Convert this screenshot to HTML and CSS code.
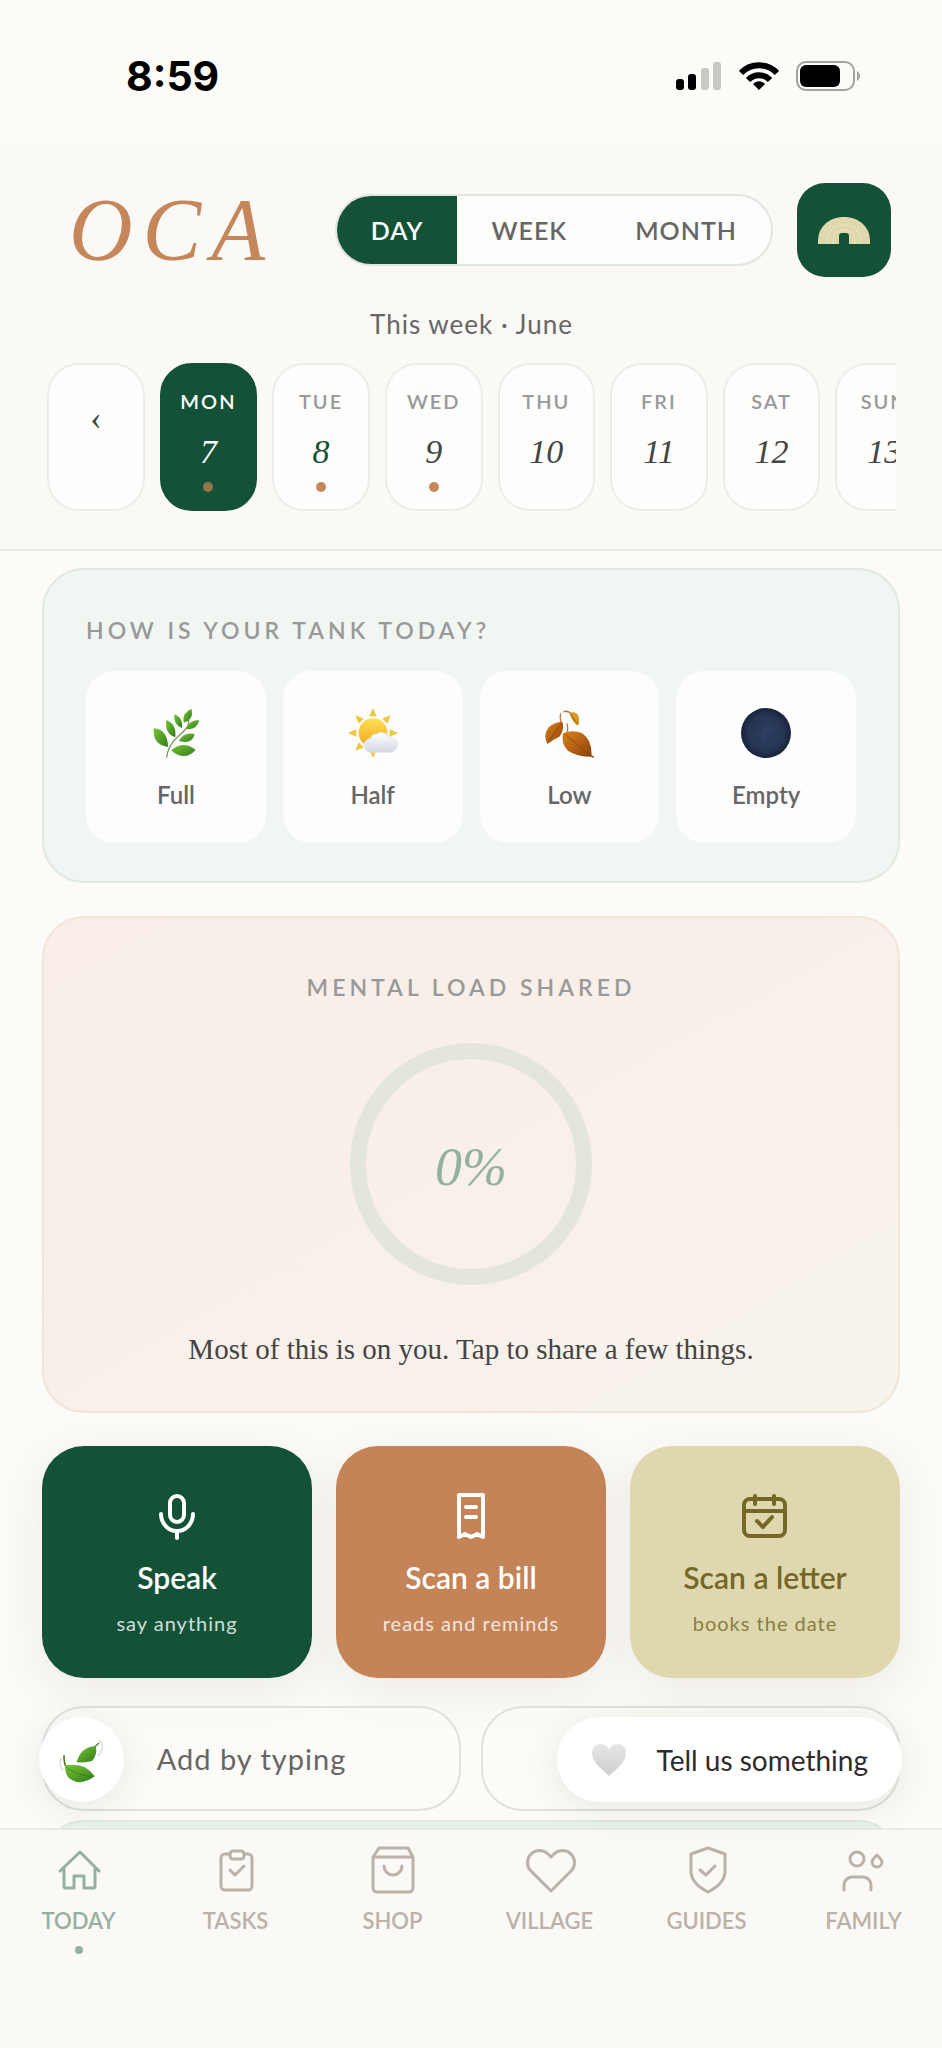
FILE: index.html
```html
<!DOCTYPE html>
<html lang="en">
<head>
<meta charset="utf-8">
<meta name="viewport" content="width=device-width, initial-scale=1">
<title>OCA</title>
<link rel="stylesheet" href="styles.css">
</head>
<body>
<div class="app">
  <div class="status">
    <span class="clock">8:59</span>
    <div class="indicators">
      <svg width="46" height="30" viewBox="0 0 46 30" aria-hidden="true">
        <rect x="0" y="18" width="8" height="11" rx="3"/>
        <rect x="12" y="13" width="8" height="16" rx="3"/>
        <rect x="25" y="7" width="8" height="22" rx="3" fill="#c9c8c4"/>
        <rect x="37" y="1" width="8" height="28" rx="3" fill="#c9c8c4"/>
      </svg>
      <svg width="40" height="30" viewBox="0 0 40 30" aria-hidden="true" fill="none" stroke="#000" stroke-width="6">
        <path d="M2 12a25 25 0 0 1 36 0"/>
        <path d="M9 19a15 15 0 0 1 22 0"/>
        <path d="M20 29l-6-6a8 8 0 0 1 12 0z" fill="#000" stroke="none"/>
      </svg>
      <svg width="64" height="30" viewBox="0 0 64 30" aria-hidden="true">
        <rect x="1" y="1" width="57" height="28" rx="9" fill="none" stroke="#a3a29f" stroke-width="2"/>
        <rect x="4" y="4" width="40" height="22" rx="6"/>
        <path d="M61 10c4 2 4 8 0 10z" fill="#a3a29f"/>
      </svg>
    </div>
  </div>

  <header class="header">
    <div class="topbar">
      <h1 class="brand">OCA</h1>
      <div class="segments">
        <button class="segment segment-active">DAY</button>
        <button class="segment">WEEK</button>
        <button class="segment">MONTH</button>
      </div>
      <button class="profile" aria-label="Home space">
        <svg width="52" height="27" viewBox="0 0 52 27" aria-hidden="true">
          <path d="M0 27v-3C0 10 11 0 26 0s26 10 26 24v3z" fill="#dfd8ad"/>
          <path d="M9 27v-3C9 14 16 8 26 8s17 6 17 16v3M15 27v-3c0-7 4-11 11-11s11 4 11 11v3" fill="none" stroke="#eee5c5" stroke-width="1"/>
          <path d="M21 27v-8a3 3 0 0 1 3-3h4a3 3 0 0 1 3 3v8z" fill="#145238"/>
        </svg>
      </button>
    </div>
    <p class="period">This week · June</p>
    <div class="days">
      <button class="day day-prev" aria-label="Previous week">‹</button>
      <button class="day day-active"><span class="day-name">MON</span><span class="day-number">7</span><span class="day-dot"></span></button>
      <button class="day"><span class="day-name">TUE</span><span class="day-number day-today">8</span><span class="day-dot"></span></button>
      <button class="day"><span class="day-name">WED</span><span class="day-number">9</span><span class="day-dot"></span></button>
      <button class="day"><span class="day-name">THU</span><span class="day-number">10</span></button>
      <button class="day"><span class="day-name">FRI</span><span class="day-number">11</span></button>
      <button class="day"><span class="day-name">SAT</span><span class="day-number">12</span></button>
      <button class="day"><span class="day-name">SUN</span><span class="day-number">13</span></button>
    </div>
  </header>

  <main class="content">
    <section class="card tank">
      <h2 class="eyebrow">HOW IS YOUR TANK TODAY?</h2>
      <div class="levels">
        <button class="level">
          <svg class="emoji" viewBox="0 0 150 150" aria-hidden="true">
            <defs><linearGradient id="leaf" x1="0" y1="0" x2="1" y2="1"><stop offset="0" stop-color="#7cc433"/><stop offset="1" stop-color="#2f7d1d"/></linearGradient></defs>
            <path d="M47 149Q50 112 85 82T112 36" fill="none" stroke="#7d9a62" stroke-width="4"/>
            <g fill="url(#leaf)">
              <path d="M8 61Q50 64 51 117Q4 110 8 61z"/>
              <path d="M46 36Q77 48 73 88Q40 78 46 36z"/>
              <path d="M70 19Q97 28 93 60Q66 50 70 19z"/>
              <path d="M121 2Q130 34 98 44Q92 16 121 2z"/>
              <path d="M145 37Q136 68 106 63Q116 34 145 37z"/>
              <path d="M131 78Q123 111 84 99Q98 70 131 78z"/>
              <path d="M134 126Q100 162 60 127Q98 96 134 126z"/>
            </g>
          </svg>
          <span>Full</span>
        </button>
        <button class="level">
          <svg class="emoji" viewBox="0 0 150 150" aria-hidden="true">
            <defs>
              <linearGradient id="sun" x1="0" y1="0" x2="0" y2="1"><stop offset="0" stop-color="#ffdf55"/><stop offset="1" stop-color="#f5a51d"/></linearGradient>
              <linearGradient id="cloud" x1="0" y1="0" x2="0" y2="1"><stop offset="0" stop-color="#fff"/><stop offset="1" stop-color="#d3d8e4"/></linearGradient>
            </defs>
            <g fill="#f0c63a">
              <path id="ray" d="M75 0l11 25H64z"/>
              <use href="#ray" transform="rotate(45 75 75)"/><use href="#ray" transform="rotate(90 75 75)"/>
              <use href="#ray" transform="rotate(180 75 75)"/><use href="#ray" transform="rotate(225 75 75)"/>
              <use href="#ray" transform="rotate(270 75 75)"/><use href="#ray" transform="rotate(315 75 75)"/>
            </g>
            <circle cx="75" cy="74" r="43" fill="url(#sun)"/>
            <path d="M70 133a21 21 0 0 1-1-42 12 12 0 0 1 16-12 22 22 0 0 1 36 9 22 22 0 0 1 8 45z" fill="url(#cloud)" stroke="#dde0ea" stroke-width="2"/>
          </svg>
          <span>Half</span>
        </button>
        <button class="level">
          <svg class="emoji" viewBox="0 0 150 150" aria-hidden="true">
            <defs><linearGradient id="autumn" x1="0" y1="0" x2="1" y2="1"><stop offset="0" stop-color="#d9821f"/><stop offset="1" stop-color="#8f4208"/></linearGradient></defs>
            <path d="M52 45Q46 30 50 16M70 78Q73 60 69 46M80 16Q68 6 58 12" fill="none" stroke="#b9763a" stroke-width="4"/>
            <path d="M55 42Q62 66 46 86Q32 92 10 108Q-4 82 14 58Q32 42 55 42z" fill="url(#autumn)"/>
            <path d="M57 76Q80 64 112 74Q146 96 142 146Q98 146 72 128Q50 108 57 76z" fill="url(#autumn)"/>
            <path d="M76 14Q98 8 104 26Q108 42 102 53Q84 42 76 14z" fill="#d49a22"/>
            <path d="M54 44L12 104M62 78l78 66M80 18l20 30" fill="none" stroke="#7e3c0b" stroke-width="2"/>
            <path d="M136 140l13 8" stroke="#8f4208" stroke-width="4"/>
          </svg>
          <span>Low</span>
        </button>
        <button class="level">
          <svg class="emoji" viewBox="0 0 150 150" aria-hidden="true">
            <defs><radialGradient id="moon"><stop offset="0" stop-color="#2f4266"/><stop offset="70%" stop-color="#263553"/><stop offset="1" stop-color="#18233a"/></radialGradient></defs>
            <circle cx="75" cy="75" r="75" fill="url(#moon)"/>
            <g fill="#1e2d4b" opacity="0.2"><circle cx="50" cy="52" r="19"/><circle cx="90" cy="86" r="15"/><circle cx="48" cy="95" r="10"/></g>
          </svg>
          <span>Empty</span>
        </button>
      </div>
    </section>

    <section class="card load">
      <h2 class="eyebrow">MENTAL LOAD SHARED</h2>
      <div class="ring"><span>0%</span></div>
      <p class="load-note">Most of this is on you. Tap to share a few things.</p>
    </section>

    <div class="actions">
      <button class="action action-green">
        <svg class="action-icon" viewBox="0 0 48 48" aria-hidden="true"><rect x="17" y="4" width="14" height="26" rx="7"/><path d="M8 22a16 17 0 0 0 32 0M24 39v7"/></svg>
        <strong>Speak</strong><small>say anything</small>
      </button>
      <button class="action action-clay">
        <svg class="action-icon" viewBox="0 0 48 48" aria-hidden="true"><path d="M12 3h24v42l-6-3-6 3-6-3-6 3zM19 15h10M19 25h10"/></svg>
        <strong>Scan a bill</strong><small>reads and reminds</small>
      </button>
      <button class="action action-sand">
        <svg class="action-icon" viewBox="0 0 48 48" aria-hidden="true"><rect x="3" y="7" width="41" height="37" rx="6"/><path d="M3 19h41M14 4v8M33 4v8M16 29l6 6 9-10"/></svg>
        <strong>Scan a letter</strong><small>books the date</small>
      </button>
    </div>

    <div class="entries">
      <button class="entry">Add by typing</button>
      <button class="entry" aria-label="More ways to add"></button>
    </div>
    <section class="card next" aria-label="Next up"></section>
  </main>

  <nav class="nav">
    <div class="floats">
      <button class="float float-round" aria-label="Breathe">
        <svg width="48" height="48" viewBox="0 0 150 150" aria-hidden="true">
          <path d="M10 68Q2 94 16 106M128 14Q144 26 136 46Q132 58 124 62" fill="none" stroke="#dcdedb" stroke-width="5"/>
          <path d="M128 22L64 80" fill="none" stroke="#47791f" stroke-width="4"/>
          <path d="M118 32Q124 60 106 78Q88 84 58 82Q64 60 78 46Q96 32 118 32z" fill="url(#leaf)"/>
          <path d="M19 60q-2 24 10 44" fill="none" stroke="#47791f" stroke-width="5"/>
          <path d="M22 92Q60 86 84 98Q104 110 115 126Q88 146 58 144Q20 134 22 92z" fill="url(#leaf)"/>
          <path d="M26 98q40 28 82 28" fill="none" stroke="#2f6d18" stroke-width="2"/>
        </svg>
      </button>
      <button class="float float-pill">
        <svg width="36" height="34" viewBox="0 0 36 34" aria-hidden="true">
          <defs><linearGradient id="heart" x1="0" y1="0" x2="0" y2="1"><stop offset="0" stop-color="#e6e6e6"/><stop offset="1" stop-color="#cfcfcf"/></linearGradient></defs>
          <path d="M18 33C12 27 1 20 1 10 1 4 5 1 9 1c5 0 8 3 9 6 1-3 4-6 9-6 4 0 8 3 8 9 0 10-11 17-17 23z" fill="url(#heart)"/>
        </svg>
        Tell us something
      </button>
    </div>
    <a class="tab tab-active" href="#today">
      <svg class="tab-icon" viewBox="0 0 48 48" aria-hidden="true"><path d="M5 25L25 6l19 19M9 21v19a2 2 0 0 0 2 2h8V30h10v12h9a2 2 0 0 0 2-2V21"/></svg>
      <span>TODAY</span>
    </a>
    <a class="tab" href="#tasks">
      <svg class="tab-icon" viewBox="0 0 48 48" aria-hidden="true"><path d="M18 8h-5a4 4 0 0 0-4 4v28a4 4 0 0 0 4 4h23a4 4 0 0 0 4-4V12a4 4 0 0 0-4-4h-4"/><rect x="18" y="5" width="14" height="8" rx="3"/><path d="M18 24l5 5 9-9"/></svg>
      <span>TASKS</span>
    </a>
    <a class="tab" href="#shop">
      <svg class="tab-icon" viewBox="0 0 48 48" aria-hidden="true"><path d="M10 2h29l5 9v31a4 4 0 0 1-4 4H8a4 4 0 0 1-4-4V11zM4 11h40M15 20a9 9 0 0 0 18 0"/></svg>
      <span>SHOP</span>
    </a>
    <a class="tab" href="#village">
      <svg class="tab-icon" viewBox="0 0 48 48" aria-hidden="true"><path d="M25 45L5 25A12 12 0 0 1 22 8l3 3 3-3a12 12 0 0 1 17 17z"/></svg>
      <span>VILLAGE</span>
    </a>
    <a class="tab" href="#guides">
      <svg class="tab-icon" viewBox="0 0 48 48" aria-hidden="true"><path d="M25 2l17 6v17c0 10-7 16-17 21C15 41 8 35 8 25V8zM17 24l6 5 9-9"/></svg>
      <span>GUIDES</span>
    </a>
    <a class="tab" href="#family">
      <svg class="tab-icon" viewBox="0 0 48 48" aria-hidden="true"><circle cx="17" cy="13" r="7"/><path d="M4 44V39a8 8 0 0 1 8-8h11a8 8 0 0 1 8 8v5M37 9c3 3 5 5 5 7a5 5 0 0 1-10 0c0-2 2-4 5-7z"/></svg>
      <span>FAMILY</span>
    </a>
  </nav>
</div>
</body>
</html>
```
FILE: styles.css
```css
* { box-sizing: border-box; }

body {
  margin: 0;
  background: #fcfbf7;
  color: #666;
  font-family: Lato, "Liberation Sans", sans-serif;
}

h1, h2, p { margin: 0; font-weight: 400; }

button {
  margin: 0;
  padding: 0;
  border: 0;
  background: none;
  color: inherit;
  font: inherit;
  cursor: pointer;
}

.app {
  display: grid;
  grid-template-rows: auto auto 1fr auto;
  grid-template-columns: minmax(0, 1fr);
  height: 100vh;
}

/* Status bar */
.status {
  display: flex;
  align-items: center;
  justify-content: space-between;
  height: 144px;
  padding: 8px 82px 0 126px;
}

.clock {
  color: #000;
  font: 700 41px/48px Inter, sans-serif;
}

.indicators { display: flex; align-items: center; gap: 17px; }

/* Header */
.header {
  padding: 39px 46px 38px 47px;
  border-bottom: 2px solid #e8eae6;
  background: #faf9f6;
}

.topbar {
  display: flex;
  align-items: center;
  justify-content: space-between;
  padding: 0 5px 0 22px;
}

.brand {
  color: #c5865a;
  font: italic 400 88px/90px "Liberation Serif", serif;
  letter-spacing: 10px;
}

.segments {
  display: flex;
  height: 72px;
  margin-left: auto;
  margin-right: 24px;
  overflow: hidden;
  border: 2px solid #dfe5e1;
  border-radius: 36px;
  background: #fdfdfc;
}

.segment {
  padding: 0 34px;
  font-size: 25px;
  font-weight: 600;
  letter-spacing: 1px;
}

.segment-active { background: #145238; color: #fff; }

.profile {
  display: flex;
  align-items: center;
  justify-content: center;
  width: 94px;
  height: 94px;
  border-radius: 28px;
  background: #145238;
}

.period {
  padding: 30px 0 22px;
  font-size: 26px;
  line-height: 34px;
  letter-spacing: 1px;
  text-align: center;
}

.days {
  display: grid;
  grid-auto-flow: column;
  grid-auto-columns: 11.5%;
  gap: 15px;
  overflow: hidden;
}

.day {
  display: flex;
  flex-direction: column;
  align-items: center;
  height: 148px;
  padding-top: 21px;
  border: 2px solid #ebedea;
  border-radius: 32px;
  background: #fdfdfc;
}

.day-name {
  color: #999;
  font-size: 20px;
  font-weight: 600;
  line-height: 30px;
  letter-spacing: 2px;
}

.day-number {
  margin-top: 10px;
  color: #444;
  font: italic 400 34px/52px "Liberation Serif", serif;
}

.day-today { color: #145238; }

.day-dot {
  width: 10px;
  height: 10px;
  margin-top: 4px;
  border-radius: 50%;
  background: #c5865a;
}

.day-active { border-color: #145238; background: #145238; }
.day-active .day-name, .day-active .day-number { color: #fff; }
.day-active .day-dot { background: #94774e; }

.day-prev {
  color: #444;
  font: 400 34px/64px "Liberation Serif", serif;
}

/* Content */
.content {
  display: flex;
  flex-direction: column;
  padding: 17px 42px 0;
  min-height: 0;
  overflow: hidden;
}

.content > * { flex: none; }

.card {
  border: 2px solid #e1e7e2;
  border-radius: 42px;
}

.eyebrow {
  color: #999;
  font-size: 23px;
  font-weight: 600;
  line-height: 30px;
  letter-spacing: 4px;
}

.tank {
  padding: 45px 42px 38px;
  background: #f1f6f3;
}

.levels {
  display: grid;
  grid-template-columns: repeat(4, 1fr);
  gap: 17px;
  margin-top: 26px;
}

.level {
  display: flex;
  flex-direction: column;
  align-items: center;
  gap: 22px;
  height: 172px;
  padding-top: 37px;
  border-radius: 28px;
  background: #fdfdfd;
  font-size: 24px;
  font-weight: 600;
  line-height: 30px;
}

.emoji { width: 50px; height: 50px; }

.load {
  display: flex;
  flex-direction: column;
  align-items: center;
  margin-top: 33px;
  padding: 54px 40px 40px;
  border-color: #f1e4db;
  background: linear-gradient(150deg, #f9eee8, #f8f0ea 60%, #f7f4ec);
}

.ring {
  display: flex;
  align-items: center;
  justify-content: center;
  width: 242px;
  height: 242px;
  margin: 41px 0 42px;
  padding-top: 6px;
  border: 16px solid #e4e5dd;
  border-radius: 50%;
  color: #94b0a0;
  font: italic 400 54px/64px "Liberation Serif", serif;
}

.load-note {
  color: #444;
  font: 400 29px/44px "Liberation Serif", serif;
}

.actions {
  display: grid;
  grid-template-columns: repeat(3, 1fr);
  gap: 24px;
  margin-top: 33px;
}

.action {
  display: flex;
  flex-direction: column;
  align-items: center;
  height: 232px;
  padding-top: 46px;
  border-radius: 42px;
  box-shadow: 0 12px 50px rgba(60, 40, 35, 0.08);
}

.action-green { background: #145238; color: #fff; }
.action-clay { background: #c48458; color: #fff; }
.action-sand { background: #dfd8ae; color: #746727; }

.action-icon {
  width: 48px;
  height: 48px;
  fill: none;
  stroke: currentColor;
  stroke-width: 4;
  stroke-linecap: round;
  stroke-linejoin: round;
}

.action strong {
  margin-top: 17px;
  font-size: 30px;
  font-weight: 600;
  line-height: 40px;
}

.action small {
  margin-top: 12px;
  font-size: 20px;
  line-height: 28px;
  letter-spacing: 1px;
  opacity: 0.8;
}

.entries {
  display: grid;
  grid-template-columns: repeat(2, 1fr);
  gap: 20px;
  margin-top: 28px;
}

.entry {
  height: 105px;
  border: 2px solid #dce2dd;
  border-radius: 42px;
  background: rgba(252, 251, 247, 0.6);
  font-size: 29px;
  letter-spacing: 1px;
}

.next {
  height: 160px;
  margin-top: 9px;
  background: #eaf0eb;
}

/* Bottom navigation */
.nav {
  position: relative;
  display: grid;
  grid-template-columns: repeat(6, 1fr);
  height: 220px;
  border-top: 2px solid #e8eae6;
  background: #faf9f6;
}

.tab {
  display: flex;
  flex-direction: column;
  align-items: center;
  padding-top: 16px;
  color: #bcb1a9;
  font-size: 22px;
  font-weight: 600;
  line-height: 30px;
  text-decoration: none;
}

.tab span { margin-top: 12px; }
.tab-active { color: #94b0a0; }

.tab-active::after {
  content: "";
  width: 8px;
  height: 8px;
  margin-top: 10px;
  border-radius: 50%;
  background: currentColor;
}

.tab-icon {
  width: 48px;
  height: 48px;
  overflow: visible;
  fill: none;
  stroke: currentColor;
  stroke-width: 3;
  stroke-linecap: round;
  stroke-linejoin: round;
}

.floats {
  position: absolute;
  right: 40px;
  bottom: calc(100% + 28px);
  left: 39px;
  display: flex;
  justify-content: space-between;
}

.float {
  display: flex;
  align-items: center;
  justify-content: center;
  height: 85px;
  border-radius: 43px;
  background: #fff;
  box-shadow: 0 6px 36px rgba(40, 60, 50, 0.1);
}

.float-round { width: 85px; }

.float-pill {
  gap: 30px;
  padding: 0 34px;
  color: #2c2c2c;
  font-size: 28px;
}
```
